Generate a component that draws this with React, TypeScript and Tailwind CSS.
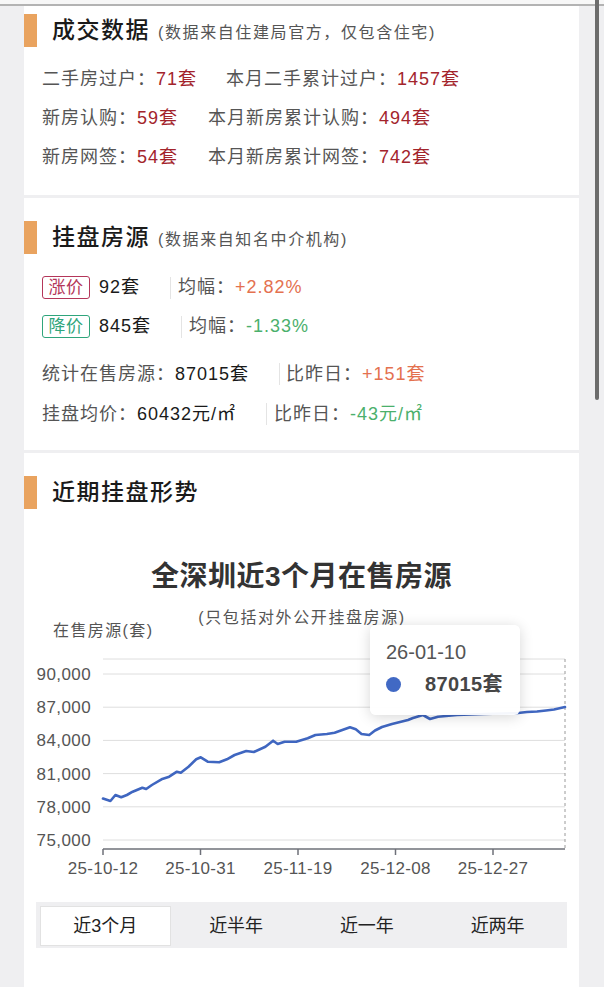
import React from 'react'

const pts: [number, number][] = [
  [79, 205.5], [86.4, 208], [91.4, 202], [97.2, 204.3], [102.9, 202], [108.7, 198.7], [118.3, 194.7],
  [122.2, 196], [127.9, 192], [137.5, 186.3], [145.2, 183.7], [152.9, 178.7], [156.8, 179.7],
  [164.5, 173.7], [172.2, 166.3], [176.8, 164.3], [183.7, 168.7], [195.2, 169.3], [202.9, 166.3],
  [210.6, 162], [222.2, 158], [229.8, 159], [241.4, 153.7], [249.1, 147.7], [253.7, 151],
  [260.6, 148.7], [272.2, 148.7], [283.7, 145.3], [291.4, 142], [302.9, 141], [310.6, 139.7],
  [318.3, 137], [326, 134.3], [331.8, 136.3], [337.5, 141], [345.2, 142], [351, 137.5],
  [358, 134], [368, 131], [376, 129], [384, 127], [389, 125], [399, 122], [406, 126],
  [414, 123.7], [433, 122], [460, 121], [494, 120], [503, 119], [513, 118.5], [522, 117.5],
  [530, 116.5], [541, 114],
]

const yTicks = [
  { v: '90,000', y: 81 },
  { v: '87,000', y: 114.2 },
  { v: '84,000', y: 147.4 },
  { v: '81,000', y: 180.6 },
  { v: '78,000', y: 213.8 },
  { v: '75,000', y: 247 },
]

const xTicks = ['25-10-12', '25-10-31', '25-11-19', '25-12-08', '25-12-27']

function Heading({ title, note }: { title: string; note?: string }) {
  return (
    <div className="flex items-center h-[33px]">
      <div className="w-[13px] h-[33px] bg-[#e9a35f] shrink-0" />
      <div className="flex items-baseline">
        <span className="ml-[15px] text-[23px] leading-[33px] font-medium tracking-[1.5px] text-[#1a1a1a]">{title}</span>
        {note && <span className="ml-[8px] text-[16px] tracking-[1.6px] text-[#555]">{note}</span>}
      </div>
    </div>
  )
}

function DealRow({ a, av, b, bv, gap }: { a: string; av: string; b: string; bv: string; gap: string }) {
  return (
    <div className="flex items-center h-[39px] pl-[18px] text-[18px] tracking-[1px]">
      <span className="text-[#555]">{a}</span>
      <span className="text-[#a3242c]">{av}</span>
      <span className={`text-[#555] ${gap}`}>{b}</span>
      <span className="text-[#a3242c]">{bv}</span>
    </div>
  )
}

function Divider() {
  return <div className="w-px h-[22px] bg-[#e4e4e4] shrink-0" />
}

function Chart() {
  const line = pts.map(p => p.join(',')).join(' ')
  return (
    <div className="relative h-[297px]">
      <svg width="555" height="297" className="block">
        <text x="278" y="30" textAnchor="middle" fontSize="16" letterSpacing="1.6" fill="#555">
          (只包括对外公开挂盘房源)
        </text>
        <text x="29" y="43" fontSize="16" letterSpacing="1.4" fill="#555">在售房源(套)</text>
        <line x1="79" x2="541" y1="66" y2="66" stroke="#dedede" strokeWidth="1" />
        {yTicks.map(t => (
          <g key={t.v}>
            <line x1="79" x2="541" y1={t.y} y2={t.y} stroke="#dedede" strokeWidth="1" />
            <text x="67" y={t.y + 6} textAnchor="end" fontSize="17" letterSpacing="0.4" fill="#555">{t.v}</text>
          </g>
        ))}
        <line x1="541" x2="541" y1="66" y2="256" stroke="#9a9a9a" strokeWidth="1" strokeDasharray="3 3" />
        <line x1="79" x2="541" y1="256" y2="256" stroke="#6e7079" strokeWidth="1.5" />
        {xTicks.map((t, i) => {
          const x = 79 + i * 97.5
          return (
            <g key={t}>
              <line x1={x} x2={x} y1="256" y2="262" stroke="#6e7079" strokeWidth="1.5" />
              <text x={x} y="281" textAnchor="middle" fontSize="17" letterSpacing="0.3" fill="#555">{t}</text>
            </g>
          )
        })}
        <polyline points={line} fill="none" stroke="#3f66c0" strokeWidth="2.6" strokeLinejoin="round" strokeLinecap="round" />
      </svg>

      {/* tooltip */}
      <div className="absolute left-[346px] top-[32px] w-[150px] h-[90px] bg-white/95 rounded-[6px] shadow-[0_2px_14px_rgba(0,0,0,0.16)] pl-[16px] pt-[13px]">
        <div className="text-[20px] leading-[28px] text-[#555]">26-01-10</div>
        <div className="flex items-center h-[34px] mt-[1px]">
          <span className="w-[15px] h-[15px] rounded-full bg-[#4169c4] shrink-0" />
          <span className="ml-[24px] text-[20px] font-bold tracking-[0.4px] text-[#464646]">87015套</span>
        </div>
      </div>
    </div>
  )
}

export default function App() {
  return (
    <div className="relative w-[604px] h-[987px] overflow-hidden bg-[#efeff1] flex flex-col [font-family:'Liberation_Sans','Noto_Sans_CJK_SC',sans-serif]">
      <div className="h-[4px] bg-[#f7f7f7] shrink-0" />
      <div className="h-[2px] bg-[#b3b3b3] shrink-0" />

      <div className="flex flex-1 min-h-0">
        <div className="w-[24px] shrink-0" />
        <main className="w-[555px] shrink-0 flex flex-col gap-[3px]">
          {/* 成交数据 */}
          <section className="bg-white h-[189px] pt-[8px]">
            <Heading title="成交数据" note="(数据来自住建局官方，仅包含住宅)" />
            <div className="mt-[13px]">
              <DealRow a="二手房过户：" av="71套" b="本月二手累计过户：" bv="1457套" gap="ml-[29px]" />
              <DealRow a="新房认购：" av="59套" b="本月新房累计认购：" bv="494套" gap="ml-[30px]" />
              <DealRow a="新房网签：" av="54套" b="本月新房累计网签：" bv="742套" gap="ml-[30px]" />
            </div>
          </section>

          {/* 挂盘房源 */}
          <section className="bg-white h-[252px] pt-[23px]">
            <Heading title="挂盘房源" note="(数据来自知名中介机构)" />
            <div className="mt-[14px] pl-[18px] text-[18px] tracking-[1px]">
              <div className="flex items-center h-[39px]">
                <span className="w-[48px] h-[23px] border border-[#b4365a] rounded-[3px] text-[#b4365a] text-[17px] tracking-[0.5px] flex items-center justify-center">涨价</span>
                <span className="ml-[9px] text-[#1a1a1a]">92套</span>
                <div className="ml-[30px]"><Divider /></div>
                <span className="ml-[7px] text-[#555]">均幅：</span>
                <span className="text-[#e4714f]">+2.82%</span>
              </div>
              <div className="flex items-center h-[39px]">
                <span className="w-[48px] h-[23px] border border-[#2fa57c] rounded-[3px] text-[#2fa57c] text-[17px] tracking-[0.5px] flex items-center justify-center">降价</span>
                <span className="ml-[9px] text-[#1a1a1a]">845套</span>
                <div className="ml-[30px]"><Divider /></div>
                <span className="ml-[7px] text-[#555]">均幅：</span>
                <span className="text-[#4bb06c]">-1.33%</span>
              </div>
              <div className="mt-[8px] flex items-center h-[40px]">
                <span className="text-[#555]">统计在售房源：</span>
                <span className="text-[#1a1a1a]">87015套</span>
                <div className="ml-[30px]"><Divider /></div>
                <span className="ml-[6px] text-[#555]">比昨日：</span>
                <span className="text-[#e4714f]">+151套</span>
              </div>
              <div className="flex items-center h-[40px]">
                <span className="text-[#555]">挂盘均价：</span>
                <span className="text-[#1a1a1a]">60432元/㎡</span>
                <div className="ml-[30px]"><Divider /></div>
                <span className="ml-[7px] text-[#555]">比昨日：</span>
                <span className="text-[#4bb06c]">-43元/㎡</span>
              </div>
            </div>
          </section>

          {/* 近期挂盘形势 */}
          <section className="bg-white flex-1 pt-[23px]">
            <Heading title="近期挂盘形势" />
            <h2 className="mt-[52px] text-center text-[28px] leading-[32px] font-bold tracking-[0.5px] text-[#333]">
              全深圳近3个月在售房源
            </h2>
            <Chart />
            <div className="mt-[12px] mx-[12px] h-[46px] bg-[#efeff1] p-[4px] pb-[2px] grid grid-cols-4">
              {['近3个月', '近半年', '近一年', '近两年'].map((t, i) => (
                <div
                  key={t}
                  className={`flex items-center justify-center text-[18px] text-[#222] ${i === 0 ? 'bg-white border border-[#e2e2e2]' : ''}`}
                >
                  {t}
                </div>
              ))}
            </div>
          </section>
        </main>
      </div>

      {/* scrollbar thumb */}
      <div className="absolute right-[5px] top-0 w-[4px] h-[400px] bg-[#6c6c6c] rounded-b-[2px]" />
    </div>
  )
}
